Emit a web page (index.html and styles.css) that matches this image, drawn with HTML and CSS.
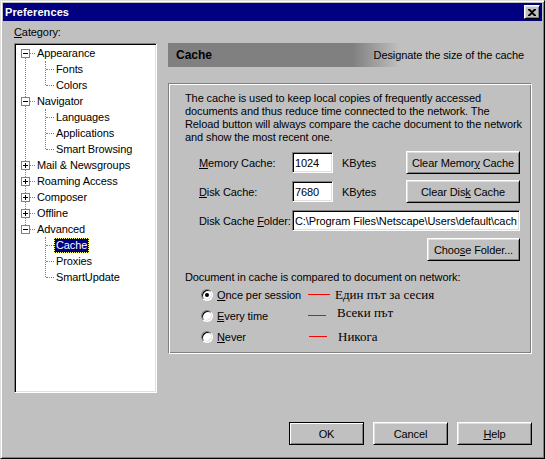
FILE: index.html
```html
<!DOCTYPE html>
<html lang="en">
<head>
    <meta charset="UTF-8">
    <meta name="viewport" content="width=device-width, initial-scale=1.0">
    <title>Preferences</title>
    <link rel="stylesheet" href="styles.css">
</head>
<body>
    <div class="window">
        <!-- Title bar -->
        <div class="titlebar">
            <span class="title">Preferences</span>
            <button class="close-btn" aria-label="Close">
                <svg width="8" height="7" viewBox="0 0 8 7"><path d="M0 0h2l2 2 2-2h2v1L5 3.5 8 6v1H6L4 5 2 7H0V6l3-2.5L0 1z" fill="#000"/></svg>
            </button>
        </div>

        <div class="main">
            <!-- Category tree -->
            <div class="sidebar">
                <div class="category-label"><span><u>C</u>ategory:</span></div>
                <div class="tree">
                    <ul class="tree-root">
                        <li>
                            <div class="row"><span class="toggle"></span><span class="label">Appearance</span></div>
                            <ul class="children">
                                <li><div class="row"><span class="label">Fonts</span></div></li>
                                <li><div class="row"><span class="label">Colors</span></div></li>
                            </ul>
                        </li>
                        <li>
                            <div class="row"><span class="toggle"></span><span class="label">Navigator</span></div>
                            <ul class="children">
                                <li><div class="row"><span class="label">Languages</span></div></li>
                                <li><div class="row"><span class="label">Applications</span></div></li>
                                <li><div class="row"><span class="label">Smart Browsing</span></div></li>
                            </ul>
                        </li>
                        <li><div class="row"><span class="toggle plus"></span><span class="label">Mail &amp; Newsgroups</span></div></li>
                        <li><div class="row"><span class="toggle plus"></span><span class="label">Roaming Access</span></div></li>
                        <li><div class="row"><span class="toggle plus"></span><span class="label">Composer</span></div></li>
                        <li><div class="row"><span class="toggle plus"></span><span class="label">Offline</span></div></li>
                        <li>
                            <div class="row"><span class="toggle"></span><span class="label">Advanced</span></div>
                            <ul class="children">
                                <li><div class="row"><span class="label selected">Cache</span></div></li>
                                <li><div class="row"><span class="label">Proxies</span></div></li>
                                <li><div class="row"><span class="label">SmartUpdate</span></div></li>
                            </ul>
                        </li>
                    </ul>
                </div>
            </div>

            <!-- Cache panel -->
            <div class="content">
                <div class="panel-header">
                    <span class="panel-title">Cache</span>
                    <span class="panel-desc">Designate the size of the cache</span>
                </div>
                <div class="group">
                    <p class="intro">The cache is used to keep local copies of frequently accessed<br>documents and thus reduce time connected to the network. The<br>Reload button will always compare the cache document to the network<br>and show the most recent one.</p>

                    <div class="field-row first">
                        <span class="field-label"><u>M</u>emory Cache:</span>
                        <input class="text-input small" type="text" value="1024">
                        <span class="unit">KBytes</span>
                        <button class="btn btn-wide">Clear Memor<u>y</u> Cache</button>
                    </div>
                    <div class="field-row">
                        <span class="field-label"><u>D</u>isk Cache:</span>
                        <input class="text-input small" type="text" value="7680">
                        <span class="unit">KBytes</span>
                        <button class="btn btn-wide">Clear Dis<u>k</u> Cache</button>
                    </div>
                    <div class="field-row">
                        <span class="field-label">Disk Cache <u>F</u>older:</span>
                        <input class="text-input folder" type="text" value="C:\Program Files\Netscape\Users\default\cache">
                    </div>
                    <div class="field-row right">
                        <button class="btn btn-choose">Choo<u>s</u>e Folder...</button>
                    </div>

                    <div class="compare-label">Document in cache is compared to document on network:</div>
                    <div class="radio-row">
                        <span class="radio-option"><span class="radio checked"></span><span><u>O</u>nce per session</span></span>
                        <span class="note-line"></span>
                        <span class="note">Един път за сесия</span>
                    </div>
                    <div class="radio-row">
                        <span class="radio-option"><span class="radio"></span><span><u>E</u>very time</span></span>
                        <span class="note-line short"></span>
                        <span class="note raised">Всеки път</span>
                    </div>
                    <div class="radio-row">
                        <span class="radio-option"><span class="radio"></span><span><u>N</u>ever</span></span>
                        <span class="note-line short shifted"></span>
                        <span class="note">Никога</span>
                    </div>
                </div>
            </div>
        </div>

        <!-- Dialog buttons -->
        <div class="actions">
            <button class="btn btn-action default">OK</button>
            <button class="btn btn-action">Cancel</button>
            <button class="btn btn-action"><u>H</u>elp</button>
        </div>
    </div>
</body>
</html>
```

FILE: styles.css
```css
/* Base */
* {
    box-sizing: border-box;
}
body {
    margin: 0;
    background-color: #c0c0c0;
    font-family: "Liberation Sans", Arial, sans-serif;
    font-size: 11px;
    letter-spacing: -0.1px;
    color: #000;
}
u {
    text-decoration: underline;
}
/* Window frame */
.window {
    width: 545px;
    height: 459px;
    padding: 2px;
    border: 1px solid;
    border-color: #dfdfdf #000 #000 #dfdfdf;
    box-shadow: inset 1px 1px #fff, inset -1px -1px #808080;
    background-color: #c0c0c0;
}
.titlebar {
    height: 18px;
    display: flex;
    align-items: center;
    justify-content: space-between;
    padding: 0 2px;
    background-color: #000080;
    color: #fff;
}
.title {
    font-weight: bold;
    letter-spacing: 0.1px;
}
.close-btn {
    width: 16px;
    height: 14px;
    padding: 0;
    display: flex;
    align-items: center;
    justify-content: center;
    background-color: #c0c0c0;
    border: 1px solid;
    border-color: #fff #000 #000 #fff;
    box-shadow: inset 1px 1px #dfdfdf, inset -1px -1px #808080;
}
.main {
    display: flex;
    padding: 0 10px 0 11px;
}
/* Tree */
.sidebar {
    width: 143px;
    flex: none;
}
.category-label {
    height: 22px;
    display: flex;
    align-items: center;
}
.tree {
    height: 350px;
    padding: 1px;
    background-color: #fff;
    border: 1px solid;
    border-color: #808080 #fff #fff #808080;
    box-shadow: inset 1px 1px #000, inset -1px -1px #dfdfdf;
}
.tree ul {
    list-style: none;
    margin: 0;
    padding: 0;
    position: relative;
}
.tree-root::before {
    content: "";
    position: absolute;
    left: 9px;
    top: 8px;
    height: 176px;
    border-left: 1px dotted #808080;
}
.row {
    height: 16px;
    display: flex;
    align-items: center;
    position: relative;
    padding-left: 5px;
}
.row::before {
    content: "";
    position: absolute;
    left: 14px;
    top: 8px;
    width: 5px;
    border-top: 1px dotted #808080;
}
.toggle {
    width: 9px;
    height: 9px;
    flex: none;
    margin-right: 5px;
    position: relative;
    z-index: 1;
    background-color: #fff;
    border: 1px solid #808080;
}
.toggle::before {
    content: "";
    position: absolute;
    left: 1px;
    top: 3px;
    width: 5px;
    height: 1px;
    background-color: #000;
}
.toggle.plus::after {
    content: "";
    position: absolute;
    left: 3px;
    top: 1px;
    width: 1px;
    height: 5px;
    background-color: #000;
}
.children::before {
    content: "";
    position: absolute;
    left: 29px;
    top: 0;
    bottom: 8px;
    border-left: 1px dotted #808080;
}
.children .row {
    padding-left: 38px;
}
.children .row::before {
    left: 30px;
    width: 8px;
}
.label {
    padding: 0 2px;
    line-height: 15px;
    white-space: nowrap;
}
.label.selected {
    background-color: #000080;
    color: #fff;
    outline: 1px dotted #ffff80;
    outline-offset: -1px;
}
/* Cache panel */
.content {
    flex: 1;
    min-width: 0;
    margin-left: 11px;
    padding-top: 22px;
}
.panel-header {
    height: 24px;
    display: flex;
    align-items: center;
    justify-content: space-between;
    padding: 0 8px;
    background: linear-gradient(to right, #808080 185px, #c0c0c0 232px);
}
.panel-title {
    font-weight: bold;
    font-size: 12px;
    letter-spacing: 0;
}
.group {
    margin-top: 16px;
    height: 271px;
    padding: 8px 11px 0 16px;
    border: 1px solid;
    border-color: #808080 #fff #fff #808080;
    box-shadow: inset 1px 1px #fff, inset -1px -1px #808080;
}
.intro {
    margin: 0;
    line-height: 13px;
    white-space: nowrap;
}
.field-row {
    height: 23px;
    display: flex;
    align-items: center;
    padding-left: 14px;
    margin-top: 6px;
}
.field-row.first {
    margin-top: 7px;
}
.field-row.right {
    justify-content: flex-end;
}
.field-label {
    width: 93px;
    flex: none;
    white-space: nowrap;
}
.text-input {
    height: 21px;
    padding: 0 2px;
    font: inherit;
    letter-spacing: inherit;
    color: #000;
    background-color: #fff;
    border: 1px solid;
    border-color: #808080 #fff #fff #808080;
    box-shadow: inset 1px 1px #000, inset -1px -1px #dfdfdf;
    outline: none;
}
.text-input.small {
    width: 41px;
}
.text-input.folder {
    flex: 1;
    min-width: 0;
}
.unit {
    margin-left: 9px;
}
.btn {
    height: 23px;
    padding: 0;
    font: inherit;
    letter-spacing: inherit;
    color: #000;
    background-color: #c0c0c0;
    border: 1px solid;
    border-color: #fff #000 #000 #fff;
    box-shadow: inset 1px 1px #dfdfdf, inset -1px -1px #808080;
}
.btn-wide {
    width: 114px;
    margin-left: auto;
}
.btn-choose {
    width: 93px;
}
.compare-label {
    margin-top: 10px;
    line-height: 13px;
}
.radio-row {
    height: 21px;
    display: flex;
    align-items: center;
    padding-left: 16px;
}
.radio-option {
    width: 107px;
    flex: none;
    display: flex;
    align-items: center;
}
.radio {
    width: 12px;
    height: 12px;
    margin-right: 4px;
    position: relative;
    border-radius: 50%;
    background-color: #fff;
    border: 1px solid;
    border-color: #808080 #fff #fff #808080;
    box-shadow: inset 1px 1px #000, inset -1px -1px #dfdfdf;
}
.radio.checked::after {
    content: "";
    position: absolute;
    left: 3px;
    top: 3px;
    width: 4px;
    height: 4px;
    border-radius: 50%;
    background-color: #000;
}
.note-line {
    width: 22px;
    height: 1px;
    margin-right: 5px;
    background-color: #f00;
}
.note-line.short {
    width: 18px;
    margin-right: 11px;
}
.note-line.shifted {
    margin-left: 1px;
}
.note {
    font-family: "Liberation Serif", "Times New Roman", serif;
    font-size: 13px;
    letter-spacing: 0;
}
.note.raised {
    margin-bottom: 6px;
}
/* Bottom buttons */
.actions {
    display: flex;
    justify-content: flex-end;
    gap: 9px;
    margin-top: 29px;
    padding-right: 10px;
}
.btn-action {
    width: 75px;
}
.btn-action.default {
    border-color: #000;
    box-shadow: inset 1px 1px #fff, inset -1px -1px #808080;
}
```
